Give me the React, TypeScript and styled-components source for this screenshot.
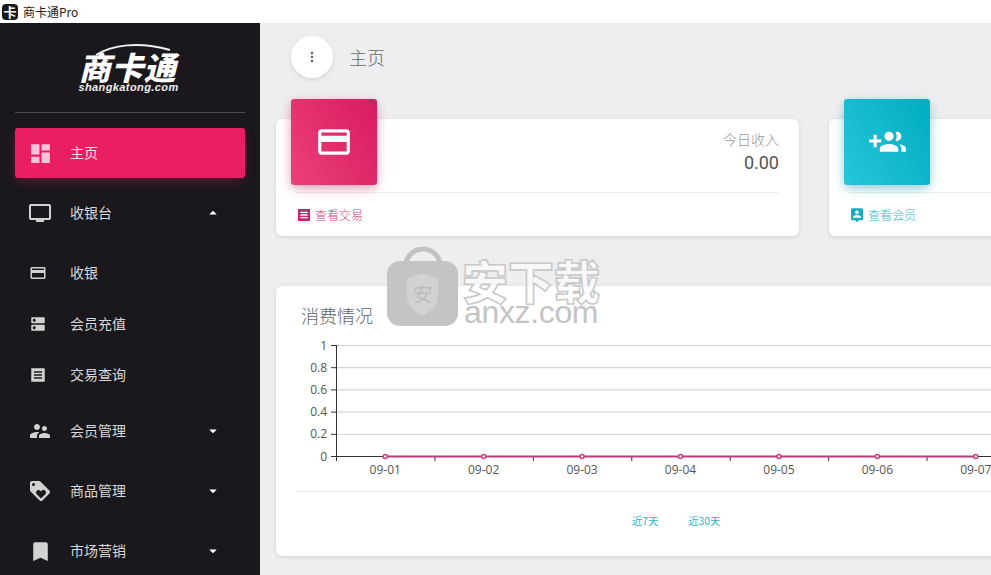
import React from "react";
import styled, { createGlobalStyle } from "styled-components";
import {
  MdDashboard, MdTv, MdCreditCard, MdLoyalty, MdBookmark,
  MdMoreVert, MdSupervisorAccount, MdArrowDropDown, MdArrowDropUp,
} from "react-icons/md";

const CJK = `"Noto Sans CJK SC", "Roboto", "Liberation Sans", sans-serif`;

const Global = createGlobalStyle`
  html, body { margin: 0; padding: 0; width: 991px; height: 575px; overflow: hidden; background: #eeeef0; }
  * { box-sizing: border-box; }
  body { font-family: ${CJK}; }
`;

const Window = styled.div`
  position: relative; width: 991px; height: 575px; overflow: hidden;
  display: flex; flex-direction: column;
`;
const TitleBar = styled.div`
  height: 23px; flex: none; background: #fff; display: flex; align-items: center;
  padding-left: 2px; gap: 5px; font-size: 12px; color: #222;
`;
const AppBadge = styled.span`
  width: 16px; height: 16px; border-radius: 4px; background: #1a1a1c; color: #fff;
  display: flex; align-items: center; justify-content: center; font-size: 13px; font-weight: 700; line-height: 1;
`;
const Body = styled.div`flex: 1; min-height: 0; display: flex;`;

const Sidebar = styled.aside`
  width: 260px; flex: none; background: #1a181c; padding: 0 15px; overflow: hidden;
`;
const Logo = styled.div`
  height: 90px; border-bottom: 1px solid #4a494c; position: relative;
  display: flex; flex-direction: column; align-items: center; padding-top: 28px;
  color: #fff; font-style: italic;
`;
const LogoMark = styled.div`
  font-size: 32px; font-weight: 900; line-height: 31px; letter-spacing: 0.5px; height: 31px; white-space: nowrap;
  margin-left: -5px;
`;
const LogoSub = styled.div`
  font-family: "Liberation Sans", sans-serif; font-size: 11px; font-weight: 700; line-height: 10px;
  letter-spacing: 0.4px; color: #eee; margin-left: -3px;
`;
const Swoosh = styled.svg`position: absolute; left: 75px; top: 19px;`;

const Nav = styled.nav`display: flex; flex-direction: column; padding-top: 15px;`;
const NavItem = styled.div<{ $active?: boolean }>`
  height: 50px; flex: none; margin-bottom: 10px; border-radius: 3px; padding-left: 13px;
  display: flex; align-items: center; font-size: 14px;
  color: ${(p) => (p.$active ? "#fdd" : "#d9d9d9")};
  background: ${(p) => (p.$active ? "#e91e63" : "transparent")};
  box-shadow: ${(p) => (p.$active ? "0 4px 12px -2px rgba(233,30,99,.35)" : "none")};
`;
const SubList = styled.div`display: flex; flex-direction: column; margin-top: -1px; padding-bottom: 6px;`;
const SubItem = styled.div`
  height: 51px; flex: none; padding-left: 14px; display: flex; align-items: center;
  font-size: 14px; color: #d9d9d9;
`;
const Label = styled.span`margin-bottom: 2px;`;
const IconSlot = styled.span<{ $active?: boolean; $w?: number }>`
  width: ${(p) => p.$w ?? 42}px; flex: none; display: flex; align-items: center; justify-content: flex-start;
  color: ${(p) => (p.$active ? "#fbc4d8" : "#d2d2d2")};
`;
const Caret = styled.span`margin-left: auto; margin-right: 23px; width: 18px; height: 18px; color: #fff; display: flex;`;

const Main = styled.main`flex: 1; min-width: 0; overflow: hidden; background: #eeeef0; padding-left: 16px;`;
const Header = styled.header`display: flex; align-items: center; height: 42px; margin: 13px 0 0 15px;`;
const RoundBtn = styled.div`
  width: 42px; height: 42px; border-radius: 50%; background: #fff; color: #666; margin-right: 16px;
  display: flex; align-items: center; justify-content: center; box-shadow: 0 2px 5px rgba(0,0,0,.1);
`;
const PageTitle = styled.h1`margin: 0; font-size: 18px; font-weight: 300; color: #666;`;

const Cards = styled.div`display: grid; grid-template-columns: 523px 523px; gap: 30px; margin-top: 41px;`;
const Card = styled.section`
  height: 117px; background: #fff; border-radius: 6px; box-shadow: 0 1px 4px rgba(0,0,0,.12);
  padding: 0 20px; display: flex; flex-direction: column;
`;
const CardTop = styled.div`height: 74px; border-bottom: 1px solid #eeeeee; display: flex; justify-content: space-between;`;
const IconBox = styled.div<{ $from: string; $to: string; $glow: string }>`
  width: 86px; height: 86px; margin: -20px 0 0 -5px; border-radius: 3px; color: #fff;
  display: flex; align-items: center; justify-content: center;
  background: linear-gradient(60deg, ${(p) => p.$from}, ${(p) => p.$to});
  box-shadow: 0 4px 14px -2px ${(p) => p.$glow}, 0 3px 8px rgba(0,0,0,.12);
`;
const Stat = styled.div`text-align: right; padding-top: 10px;`;
const StatLabel = styled.div`font-size: 14px; font-weight: 300; line-height: 20px; color: #999;`;
const StatValue = styled.div`font-family: Roboto, sans-serif; font-size: 18px; line-height: 28px; color: #555;`;
const CardFoot = styled.div<{ $color: string }>`
  display: flex; align-items: center; gap: 3px; height: 43px; font-size: 12px; font-weight: 300;
  color: ${(p) => p.$color};
`;
const ChartCard = styled.section`
  width: 1000px; height: 270px; margin-top: 50px; background: #fff; border-radius: 6px;
  box-shadow: 0 1px 4px rgba(0,0,0,.12); padding: 17px 20px 0; display: flex; flex-direction: column;
`;
const ChartTitle = styled.h2`margin: 0 0 8px 5px; font-size: 18px; font-weight: 300; line-height: 24px; color: #666;`;
const ChartFoot = styled.div`
  border-top: 1px solid #eeeeee; padding: 21px 0 0 336px; display: flex; gap: 30px;
  font-size: 10.3px; font-weight: 400; color: #22b4c8; line-height: 16px;
`;

const Watermark = styled.div`position: absolute; left: 387px; top: 246px; width: 215px; height: 82px; pointer-events: none;`;
const WmBag = styled.svg`position: absolute; left: 0; top: 0;`;
const WmCn = styled.div`
  position: absolute; left: 75px; top: 13px; font-size: 46px; font-weight: 900; line-height: 40px;
  color: rgba(255,255,255,.65); -webkit-text-stroke: 1.5px #c8c8c8; white-space: nowrap;
`;
const WmEn = styled.div`
  position: absolute; left: 77px; top: 53px; font-family: "Liberation Sans", sans-serif; font-size: 32px; line-height: 26px;
  color: #c4c4c4; white-space: nowrap; letter-spacing: -0.35px;
`;

function PathIcon({ d, size, color, evenodd }: { d: string; size: number; color?: string; evenodd?: boolean }) {
  return (
    <svg width={size} height={size} viewBox="0 0 24 24" fill={color ?? "currentColor"} style={{ flex: "none" }}>
      <path d={d} fillRule={evenodd ? "evenodd" : "nonzero"} />
    </svg>
  );
}
const LIST = "M3.5 3h17c.3 0 .5.2.5.5v17c0 .3-.2.5-.5.5h-17c-.3 0-.5-.2-.5-.5v-17c0-.3.2-.5.5-.5z M6.5 7h11v2h-11z M6.5 11h11v2h-11z M6.5 15h11v2h-11z";
const DNS = "M20 13H4c-.55 0-1 .45-1 1v6c0 .55.45 1 1 1h16c.55 0 1-.45 1-1v-6c0-.55-.45-1-1-1zM7 19c-1.1 0-2-.9-2-2s.9-2 2-2 2 .9 2 2-.9 2-2 2zM20 3H4c-.55 0-1 .45-1 1v6c0 .55.45 1 1 1h16c.55 0 1-.45 1-1V4c0-.55-.45-1-1-1zM7 9c-1.1 0-2-.9-2-2s.9-2 2-2 2 .9 2 2-.9 2-2 2z";
const PERSON_PIN = "M19 2H5c-1.11 0-2 .9-2 2v14c0 1.1.89 2 2 2h4l3 3 3-3h4c1.1 0 2-.9 2-2V4c0-1.1-.9-2-2-2zm-7 3.3c1.49 0 2.7 1.21 2.7 2.7 0 1.49-1.21 2.7-2.7 2.7-1.49 0-2.7-1.21-2.7-2.7 0-1.49 1.21-2.7 2.7-2.7zM18 16H6v-.9c0-2 4-3.1 6-3.1s6 1.1 6 3.1v.9z";
const GROUP_ADD = "M8 10H5V7H3v3H0v2h3v3h2v-3h3v-2zm10 1c1.66 0 2.99-1.34 2.99-3S19.66 5 18 5c-.32 0-.63.05-.91.14.57.81.9 1.79.9 2.86s-.34 2.04-.9 2.86c.28.09.59.14.91.14zm-5 0c1.66 0 2.99-1.34 2.99-3S14.66 5 13 5s-3 1.34-3 3 1.34 3 3 3zm6.62 2.16c.83.73 1.38 1.66 1.38 2.84v2h3v-2c0-1.54-2.37-2.49-4.38-2.84zM13 13c-2 0-6 1-6 3v2h12v-2c0-2-4-3-6-3z";

const labelsY = [["1", 345], ["0.8", 367.2], ["0.6", 389.4], ["0.4", 411.6], ["0.2", 433.8], ["0", 456]] as const;
const X0 = 40;
const BAND = 98.43;
const days = ["09-01", "09-02", "09-03", "09-04", "09-05", "09-06", "09-07"];

function Chart() {
  const y = (v: number) => v - 335;
  const right = 700;
  return (
    <svg width="960" height="156" style={{ display: "block", flex: "none" }}>
      {labelsY.map(([l, v]) => (
        <g key={l}>
          <line x1={X0} x2={right} y1={y(v) + 0.5} y2={y(v) + 0.5} stroke={l === "0" ? "#333" : "#ccc"} />
          <line x1={X0 - 5} x2={X0} y1={y(v) + 0.5} y2={y(v) + 0.5} stroke="#333" />
          <text x={X0 - 9} y={y(v) + 4.5} textAnchor="end" fontSize="12" fill="#555" fontFamily="'Open Sans', sans-serif">{l}</text>
        </g>
      ))}
      <line x1={X0 + 0.5} x2={X0 + 0.5} y1={y(345)} y2={y(456) + 5} stroke="#333" />
      {Array.from({ length: 7 }).map((_, i) => (
        <line key={i} x1={X0 + 0.5 + i * BAND} x2={X0 + 0.5 + i * BAND} y1={y(456)} y2={y(456) + 5} stroke="#333" />
      ))}
      <line x1={X0 + BAND / 2} x2={X0 + BAND * 6.5} y1={y(456) + 0.5} y2={y(456) + 0.5} stroke="#b83d7c" strokeWidth="2" />
      {days.map((d, i) => {
        const cx = X0 + BAND / 2 + i * BAND;
        return (
          <g key={d}>
            <circle cx={cx} cy={y(456) + 0.5} r="2" fill="#fff" stroke="#d0387f" strokeWidth="1.5" />
            <text x={cx} y={y(456) + 18} textAnchor="middle" fontSize="12" fill="#555" fontFamily="'Open Sans', sans-serif">{d}</text>
          </g>
        );
      })}
    </svg>
  );
}

export default function App() {
  return (
    <Window>
      <Global />
      <TitleBar><AppBadge>卡</AppBadge>商卡通Pro</TitleBar>
      <Body>
        <Sidebar>
          <Logo>
            <Swoosh width="90" height="14" viewBox="0 0 90 14" fill="none">
              <path d="M6 13 C22 3 48 -1 80 8" stroke="#f0f0f0" strokeWidth="2" />
            </Swoosh>
            <LogoMark>商卡通</LogoMark>
            <LogoSub>shangkatong.com</LogoSub>
          </Logo>
          <Nav>
            <NavItem $active><IconSlot $active><MdDashboard size={25} /></IconSlot><Label>主页</Label></NavItem>
            <NavItem><IconSlot><MdTv size={24} /></IconSlot><Label>收银台</Label><Caret><MdArrowDropUp size={18} /></Caret></NavItem>
            <SubList>
              <SubItem><IconSlot $w={41}><MdCreditCard size={18} /></IconSlot><Label>收银</Label></SubItem>
              <SubItem><IconSlot $w={41}><PathIcon d={DNS} size={18} /></IconSlot><Label>会员充值</Label></SubItem>
              <SubItem><IconSlot $w={41}><PathIcon d={LIST} size={18} evenodd /></IconSlot><Label>交易查询</Label></SubItem>
            </SubList>
            <NavItem><IconSlot><MdSupervisorAccount size={24} /></IconSlot><Label>会员管理</Label><Caret><MdArrowDropDown size={18} /></Caret></NavItem>
            <NavItem><IconSlot><MdLoyalty size={24} /></IconSlot><Label>商品管理</Label><Caret><MdArrowDropDown size={18} /></Caret></NavItem>
            <NavItem><IconSlot><MdBookmark size={25} /></IconSlot><Label>市场营销</Label><Caret><MdArrowDropDown size={18} /></Caret></NavItem>
          </Nav>
        </Sidebar>
        <Main>
          <Header>
            <RoundBtn><MdMoreVert size={16} /></RoundBtn>
            <PageTitle>主页</PageTitle>
          </Header>
          <Cards>
            <Card>
              <CardTop>
                <IconBox $from="#ec407a" $to="#d81b60" $glow="rgba(233,30,99,.4)"><MdCreditCard size={38} /></IconBox>
                <Stat><StatLabel>今日收入</StatLabel><StatValue>0.00</StatValue></Stat>
              </CardTop>
              <CardFoot $color="#cc4a86"><PathIcon d={LIST} size={16} color="#c2266f" evenodd />查看交易</CardFoot>
            </Card>
            <Card>
              <CardTop>
                <IconBox $from="#26c6da" $to="#00acc1" $glow="rgba(0,172,193,.4)"><PathIcon d={GROUP_ADD} size={37} /></IconBox>
              </CardTop>
              <CardFoot $color="#3bb8c9"><PathIcon d={PERSON_PIN} size={16} color="#16aec2" />查看会员</CardFoot>
            </Card>
          </Cards>
          <ChartCard>
            <ChartTitle>消费情况</ChartTitle>
            <Chart />
            <ChartFoot><span>近7天</span><span>近30天</span></ChartFoot>
          </ChartCard>
        </Main>
      </Body>
      <Watermark>
        <WmBag width="72" height="80" viewBox="0 0 72 80">
          <path d="M18 24 C18 -4 54 -4 54 24" fill="none" stroke="#c2c2c2" strokeWidth="5" />
          <rect x="0" y="15" width="71" height="65" rx="13" fill="#c4c4c4" />
          <path d="M20 33 L35 27 L51 33 V50 C51 60 43 66 35 70 C27 66 20 60 20 50 Z" fill="#d2d2d2" />
          <text x="35.5" y="56" textAnchor="middle" fontSize="20" fill="#bdbdbd" fontFamily='"Noto Sans CJK SC", sans-serif'>安</text>
        </WmBag>
        <WmCn>安下载</WmCn>
        <WmEn>anxz.com</WmEn>
      </Watermark>
    </Window>
  );
}
